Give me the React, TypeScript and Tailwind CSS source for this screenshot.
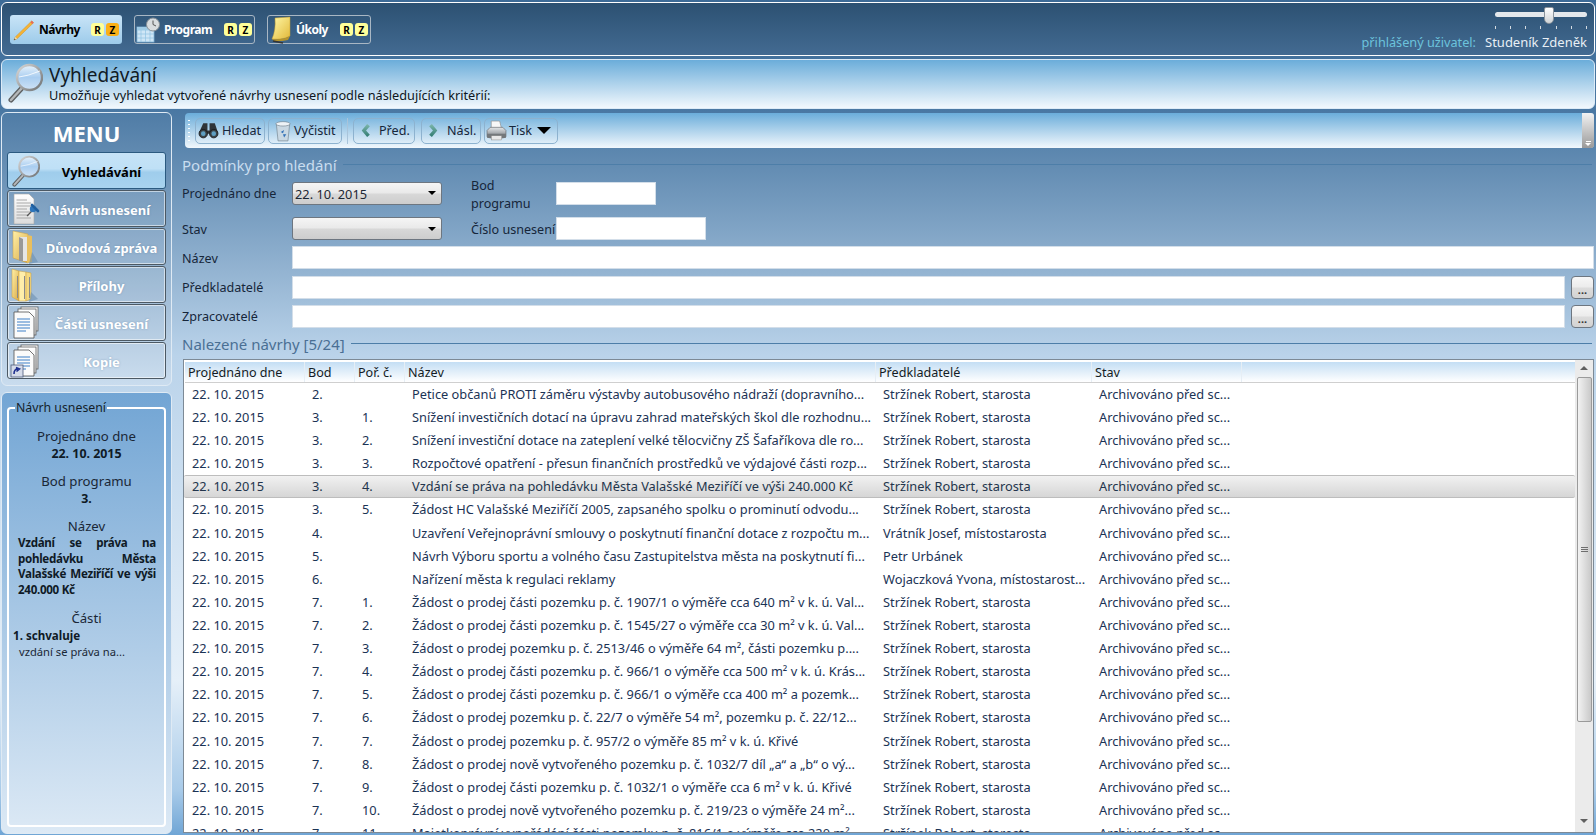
import React from "react";

const F = '"Noto Sans", "Open Sans", sans-serif';

type R = { b: string; p: string; n: string; w?: string; h?: number; sel?: boolean };
const S = "Stržínek Robert, starosta";
const rows: R[] = [
  { b: "2.", p: "", n: "Petice občanů PROTI záměru výstavby autobusového nádraží (dopravního..." },
  { b: "3.", p: "1.", n: "Snížení investičních dotací na úpravu zahrad mateřských škol dle rozhodnu..." },
  { b: "3.", p: "2.", n: "Snížení investiční dotace na zateplení velké tělocvičny ZŠ Šafaříkova dle ro..." },
  { b: "3.", p: "3.", n: "Rozpočtové opatření - přesun finančních prostředků ve výdajové části rozp..." },
  { b: "3.", p: "4.", n: "Vzdání se práva na pohledávku Města Valašské Meziříčí ve výši 240.000 Kč", sel: true },
  { b: "3.", p: "5.", n: "Žádost HC Valašské Meziříčí 2005, zapsaného spolku o prominutí odvodu...", h: 24 },
  { b: "4.", p: "", n: "Uzavření Veřejnoprávní smlouvy o poskytnutí finanční dotace z rozpočtu m...", w: "Vrátník Josef, místostarosta" },
  { b: "5.", p: "", n: "Návrh Výboru sportu a volného času Zastupitelstva města na poskytnutí fi...", w: "Petr Urbánek" },
  { b: "6.", p: "", n: "Nařízení města k regulaci reklamy", w: "Wojaczková Yvona, místostarost..." },
  { b: "7.", p: "1.", n: "Žádost o prodej části pozemku p. č. 1907/1 o výměře cca 640 m² v k. ú. Val..." },
  { b: "7.", p: "2.", n: "Žádost o prodej části pozemku p. č. 1545/27 o výměře cca 30 m² v k. ú. Val..." },
  { b: "7.", p: "3.", n: "Žádost o prodej pozemku p. č. 2513/46  o výměře 64 m², části pozemku p...." },
  { b: "7.", p: "4.", n: "Žádost o prodej části pozemku p. č. 966/1 o výměře cca 500 m² v k. ú. Krás..." },
  { b: "7.", p: "5.", n: "Žádost o prodej části pozemku p. č. 966/1 o výměře cca 400 m² a pozemk..." },
  { b: "7.", p: "6.", n: "Žádost o prodej pozemku p. č. 22/7 o výměře 54 m², pozemku p. č. 22/12...", h: 24 },
  { b: "7.", p: "7.", n: "Žádost o prodej pozemku p. č. 957/2 o výměře 85 m² v k. ú. Křivé" },
  { b: "7.", p: "8.", n: "Žádost o prodej nově vytvořeného pozemku p. č. 1032/7 díl „a“ a „b“ o vý..." },
  { b: "7.", p: "9.", n: "Žádost o prodej části pozemku p. č. 1032/1 o výměře cca 6 m² v k. ú. Křivé" },
  { b: "7.", p: "10.", n: "Žádost o prodej nově vytvořeného pozemku p. č. 219/23 o výměře 24 m²..." },
  { b: "7.", p: "11.", n: "Majetkoprávní vypořádání části pozemku p. č. 816/1 o výměře cca 220 m²" },
];

function Defs() {
  return (
    <svg width="0" height="0" className="block h-0 w-0">
      <defs>
        <linearGradient id="lens" x1="0" y1="0" x2="0" y2="1">
          <stop offset="0" stopColor="#e8f3fc" />
          <stop offset="0.5" stopColor="#a9cdf0" />
          <stop offset="1" stopColor="#cfe3f7" />
        </linearGradient>
        <linearGradient id="metal" x1="0" y1="0" x2="1" y2="1">
          <stop offset="0" stopColor="#d8d8d8" />
          <stop offset="1" stopColor="#6f7274" />
        </linearGradient>
        <linearGradient id="folder" x1="0" y1="0" x2="1" y2="1">
          <stop offset="0" stopColor="#fff0a8" />
          <stop offset="1" stopColor="#d9a944" />
        </linearGradient>
        <linearGradient id="paper" x1="0" y1="0" x2="0" y2="1">
          <stop offset="0" stopColor="#ffffff" />
          <stop offset="1" stopColor="#dcdcdc" />
        </linearGradient>
        <linearGradient id="note" x1="0" y1="0" x2="1" y2="1">
          <stop offset="0" stopColor="#fff8a8" />
          <stop offset="1" stopColor="#e2b93a" />
        </linearGradient>
        <linearGradient id="prn" x1="0" y1="0" x2="0" y2="1">
          <stop offset="0" stopColor="#e4e6e8" />
          <stop offset="1" stopColor="#80858a" />
        </linearGradient>
        <linearGradient id="chev" x1="0" y1="0" x2="0" y2="1">
          <stop offset="0" stopColor="#7fb8ad" />
          <stop offset="1" stopColor="#2f7a70" />
        </linearGradient>
      </defs>
    </svg>
  );
}

function Magnifier({ className }: { className: string }) {
  return (
    <svg viewBox="0 0 35 40" className={className}>
      <path d="M14 25 L3 37" stroke="#5d6062" strokeWidth="5" strokeLinecap="round" />
      <path d="M14 25 L3 37" stroke="#b5b8ba" strokeWidth="2.4" strokeLinecap="round" />
      <circle cx="21.5" cy="14.5" r="12.5" fill="url(#lens)" stroke="url(#metal)" strokeWidth="2.4" />
      <path d="M11 14 Q20 13 32 8" stroke="#ffffff" strokeWidth="1" fill="none" opacity="0.8" />
    </svg>
  );
}

function Pencil() {
  return (
    <svg viewBox="0 0 24 24" className="h-[22px] w-[24px]">
      <path d="M1 23 L2.5 19.5 L20.5 2 L22.5 4 L4.5 21.5 Z" fill="#f5b335" stroke="#c0841f" strokeWidth="0.4" />
      <path d="M1 23 L2.5 19.5 L4.5 21.5 Z" fill="#f3dcb0" />
      <path d="M1 23 L1.8 21.2 L2.9 22.3 Z" fill="#333" />
      <path d="M20.5 2 L22.5 4 L21 5.5 L19 3.5 Z" fill="#e8665e" />
    </svg>
  );
}

function CalendarClock() {
  return (
    <svg viewBox="0 0 24 26" className="h-[26px] w-[24px]">
      <rect x="1" y="10" width="17" height="15" fill="#cfe6f6" stroke="#7fb3d6" strokeWidth="0.8" />
      <rect x="1" y="10" width="17" height="3.5" fill="#9fcbe6" />
      <path d="M1 17 H18 M1 21 H18 M5 13 V25 M9.5 13 V25 M14 13 V25" stroke="#8fc2e2" strokeWidth="0.7" />
      <circle cx="17" cy="7.5" r="6.5" fill="#d8dcdf" stroke="#8b9298" strokeWidth="1" />
      <path d="M17 3.5 V7.5 L20 9" stroke="#555" strokeWidth="1" fill="none" />
    </svg>
  );
}

function StickyNote() {
  return (
    <svg viewBox="0 0 24 28" className="h-[28px] w-[24px]">
      <path d="M6 2 L21 1 L21 20 Q14 24 3 23 Q7 14 6 2 Z" fill="url(#note)" stroke="#c49c2f" strokeWidth="0.5" />
      <path d="M3 23 Q14 24 21 20 L19 24 Q10 26 5 25 Z" fill="#b5942c" />
      <path d="M4 25 L14 27" stroke="#333" strokeWidth="1.6" />
    </svg>
  );
}

function DocPin() {
  return (
    <svg viewBox="0 0 28 32" className="h-[32px] w-[28px]">
      <path d="M2 1 H17 L22 6 V31 H2 Z" fill="url(#paper)" stroke="#a4a4a4" strokeWidth="0.6" />
      <path d="M4.5 7 H15 M4.5 10 H19 M4.5 13 H19 M4.5 16 H15 M4.5 19 H19 M4.5 22 H17 M4.5 25 H19" stroke="#a8a8a8" strokeWidth="1" />
      <path d="M15 23 L20 18" stroke="#555" strokeWidth="1.2" />
      <circle cx="21" cy="16" r="3.2" fill="#2d75ba" />
      <path d="M20 12 L26 18" stroke="#1f5f9f" strokeWidth="2.6" strokeLinecap="round" />
    </svg>
  );
}

function FolderOne() {
  return (
    <svg viewBox="0 0 30 34" className="h-[34px] w-[30px]">
      <path d="M2 1 L17 4 V33 L2 28 Z" fill="url(#folder)" stroke="#c89d3e" strokeWidth="0.5" />
      <path d="M8 7 H16 V31 H8 Z" fill="#e5e5e5" />
      <path d="M8 7 L12 9 V31 H8 Z" fill="#777" opacity="0.7" />
      <path d="M16 5 L21 6 V32 L16 33 Z" fill="#e9bf5e" />
      <path d="M21 22 L27 32 L18 34 Z" fill="#6a8fb3" opacity="0.6" />
    </svg>
  );
}

function FolderMany() {
  return (
    <svg viewBox="0 0 30 34" className="h-[34px] w-[30px]">
      <path d="M1 1 L8 3 V33 L1 29 Z" fill="url(#folder)" stroke="#c89d3e" strokeWidth="0.5" />
      <path d="M8 3 L15 4 V33 L8 33 Z" fill="#ffeeaa" stroke="#c89d3e" strokeWidth="0.5" />
      <path d="M15 4 L20 5 V31 L15 33 Z" fill="#f5d980" stroke="#c89d3e" strokeWidth="0.5" />
      <path d="M6.5 8 V30 M13.5 8 V31 M18.5 9 V30" stroke="#8a8a8a" strokeWidth="1" />
      <path d="M20 24 L27 31 L18 34 Z" fill="#6a8fb3" opacity="0.6" />
    </svg>
  );
}

function Docs({ shortcut }: { shortcut?: boolean }) {
  return (
    <svg viewBox="0 0 32 34" className="h-[34px] w-[32px]">
      <rect x="11" y="1" width="17" height="24" fill="url(#paper)" stroke="#5f5f5f" strokeWidth="0.8" />
      <rect x="8" y="3" width="18" height="26" fill="url(#paper)" stroke="#5f5f5f" strokeWidth="0.8" />
      <path d="M4 6 H19 L24 11 V32 H4 Z" fill="#fbfbfb" stroke="#505050" strokeWidth="0.8" />
      <path d="M7 13 H20 M7 16 H20 M7 19 H20 M7 22 H20 M7 25 H16" stroke="#3f80c8" strokeWidth="1.2" />
      {shortcut && (
        <g>
          <rect x="1" y="21" width="12" height="12" fill="#d5dbe9" stroke="#4c5b7a" strokeWidth="0.8" />
          <path d="M4 30 Q4 25 8 25 M6 23.5 L9.5 25 L6.5 27.5" stroke="#1f2f8f" strokeWidth="1.6" fill="none" />
        </g>
      )}
    </svg>
  );
}

function Binoculars() {
  return (
    <svg viewBox="0 0 20 16" className="h-[17px] w-[21px]">
      <path d="M5 1 L9 1 L9 8 L11 8 L11 1 L16 1 L19 10 L12 11 L8 11 L1 10 Z" fill="#2f3438" />
      <circle cx="5" cy="11" r="4" fill="#3a4246" stroke="#15181a" strokeWidth="0.8" />
      <circle cx="15" cy="11" r="4" fill="#3a4246" stroke="#15181a" strokeWidth="0.8" />
      <circle cx="5" cy="11" r="2.2" fill="#5f9fc2" />
      <circle cx="15" cy="11" r="2.2" fill="#5f9fc2" />
    </svg>
  );
}

function Bin() {
  return (
    <svg viewBox="0 0 16 20" className="h-[22px] w-[18px]">
      <path d="M2 4 L14 4 L12.5 19 L3.5 19 Z" fill="#c9d8e3" stroke="#74838e" strokeWidth="0.6" />
      <ellipse cx="8" cy="3.5" rx="6.5" ry="2" fill="#eef3f7" stroke="#74838e" strokeWidth="0.6" />
      <path d="M6 11 L9 9 L8 12 Z M8 13 L11 13 L9 16 Z" fill="#2f6fb6" />
    </svg>
  );
}

function Printer() {
  return (
    <svg viewBox="0 0 20 20" className="h-[23px] w-[21px]">
      <path d="M5 1 H13 L15 9 H5 Z" fill="#f7f7f7" stroke="#8a8a8a" strokeWidth="0.6" />
      <path d="M1 10 L4 7 H16 L19 10 V16 H1 Z" fill="url(#prn)" stroke="#5f6366" strokeWidth="0.6" />
      <path d="M1 13 H19 V17 Q10 19 1 17 Z" fill="#74787b" />
      <rect x="5" y="15" width="10" height="4" fill="#e8e8e8" stroke="#7a7a7a" strokeWidth="0.4" />
    </svg>
  );
}

function Chevron({ left }: { left?: boolean }) {
  return (
    <svg viewBox="0 0 8 12" className="h-[13px] w-[9px]">
      <path d={left ? "M5.5 0 L0.5 6 L5.5 12 L8 10 L4.5 6 L8 2 Z" : "M2.5 0 L7.5 6 L2.5 12 L0 10 L3.5 6 L0 2 Z"} fill="url(#chev)" />
    </svg>
  );
}

function TopBtn({ icon, label, active, w, labelCls }: { icon: React.ReactNode; label: string; active?: boolean; w: string; labelCls: string }) {
  return (
    <div className={`flex h-[29px] items-center rounded-[3px] ${w} ${active ? "bg-[linear-gradient(#c9e4f7,#9dcbea)] text-black" : "border border-[#a9b7c4] text-white"}`}>
      <div className={`flex w-[28px] shrink-0 items-center justify-center ${active ? "" : "-ml-px"}`}>{icon}</div>
      <span className={`${labelCls} text-[12px] font-bold tracking-[-0.5px]`}>{label}</span>
      <div className={`ml-auto flex items-center gap-[2px] ${active ? "mr-[3px]" : "mr-[2px]"}`}>
        <span className="flex h-[13px] w-[13px] items-center justify-center rounded-[3px] bg-[#ffff99] text-[10px] font-bold text-black">R</span>
        <span className={`flex h-[13px] w-[13px] items-center justify-center rounded-[3px] text-[10px] font-bold text-black ${active ? "bg-[#fbb017]" : "bg-[#ffff99]"}`}>Z</span>
      </div>
    </div>
  );
}

function MenuBtn({ icon, label, active, cx }: { icon: React.ReactNode; label: string; active?: boolean; cx: string }) {
  return (
    <div className={`flex h-[37px] items-center rounded-[3px] border ${active ? "border-[#2b5a80] bg-[linear-gradient(#c6e3f7_0%,#bfe0f6_45%,#9fcdec_55%,#a8d3ef_100%)]" : "border-[#4c5964] bg-white/5 shadow-[inset_0_0_0_1px_rgba(255,255,255,0.55)]"}`}>
      <div className="flex w-[36px] shrink-0 items-center justify-center">{icon}</div>
      <span className={`flex-1 whitespace-nowrap pt-[3px] text-center text-[13px] font-bold ${cx} ${active ? "text-black" : "text-white [text-shadow:0_0_2px_rgba(70,110,150,0.5)]"}`}>{label}</span>
    </div>
  );
}

function ToolBtn({ children, w }: { children: React.ReactNode; w: string }) {
  return <div className={`flex h-[26px] items-center rounded-[5px] border border-[#8db2cf] text-[12.6px] text-[#16263a] ${w}`}>{children}</div>;
}

function Combo({ value }: { value?: string }) {
  return (
    <div className="flex h-[23px] w-[150px] items-center justify-between rounded-[3px] border border-[#6d7680] bg-[linear-gradient(#f5f5f5_0%,#e9e9e9_48%,#d8d8d8_52%,#cdcdcd_100%)] pl-[2px] pr-[5px] text-[12.8px] text-[#1c2733]">
      <span className="pt-[2px]">{value ?? ""}</span>
      <span className="h-0 w-0 border-x-[4px] border-t-[4px] border-x-transparent border-t-black" />
    </div>
  );
}

function Field({ cls }: { cls: string }) {
  return <input readOnly className={`h-[23px] border border-[#d3dee9] bg-white outline-none ${cls}`} />;
}

function Dots() {
  return (
    <div className="flex h-[23px] w-[23px] shrink-0 items-end justify-center rounded-[4px] border border-[#6d7680] bg-[linear-gradient(#f7f7f7_0%,#ececec_48%,#dcdcdc_52%,#d3d3d3_100%)] pb-[3px] text-[11px] font-bold leading-[11px] text-[#333]">
      ...
    </div>
  );
}

function Section({ title, cls }: { title: string; cls: string }) {
  return (
    <div className="flex h-[20px] items-center">
      <span className={`whitespace-nowrap text-[15px] ${cls}`}>{title}</span>
      <div className="mb-[2px] ml-[6px] mr-[2px] h-px flex-1 bg-[#4d7ea8]" />
    </div>
  );
}

const cols = "grid grid-cols-[120px_50px_50px_471px_216px_150px]";

export default function App() {
  return (
    <div
      className="flex h-[835px] w-[1596px] flex-col overflow-hidden bg-[linear-gradient(#3d6b97_0px,#4a78a3_112px,#bad3ea_355px,#e6f0f9_680px,#a9cbe9_790px,#6fa5d5_835px)] text-[12.6px] leading-[16px] text-[#16263a]"
      style={{ fontFamily: F }}
    >
      <Defs />
      {/* top bar */}
      <header className="mx-px mt-[2px] flex h-[54px] items-start justify-between rounded-[6px] border border-white bg-[linear-gradient(#2c5172,#436b92)] pl-[8px] pr-[7px]">
        <div className="mt-[12px] flex gap-[12px]">
          <TopBtn active icon={<Pencil />} label="Návrhy" w="w-[112px]" labelCls="ml-px" />
          <TopBtn icon={<CalendarClock />} label="Program" w="w-[121px]" labelCls="ml-[2px]" />
          <TopBtn icon={<StickyNote />} label="Úkoly" w="w-[104px]" labelCls="ml-px" />
        </div>
        <div className="flex flex-col items-end">
          <div className="mt-[3px] w-[92px]">
            <div className="relative mt-[6px] h-[5px] rounded-full bg-[#e4e8ec]">
              <div className="absolute left-[49px] top-[-5px] h-[17px] w-[10px] rounded-b-[5px] rounded-t-[2px] border border-[#8b949c] bg-[linear-gradient(#ffffff,#cfd3d6)]" />
            </div>
            <div className="mt-[9px] flex justify-between">
              {[0, 1, 2, 3, 4, 5, 6].map((i) => (
                <span key={i} className="h-[3px] w-px bg-[#d5dce2]" />
              ))}
            </div>
          </div>
          <div className="mt-[4px] flex h-[18px] items-center whitespace-nowrap text-[13px]">
            <span className="text-[12.7px] text-[#6cc3dc]">přihlášený uživatel:</span>
            <span className="ml-[9px] text-[#e8eff5]">Studeník Zdeněk</span>
          </div>
        </div>
      </header>

      {/* title */}
      <div className="mx-px mt-[3px] flex h-[50px] rounded-[6px] border border-[#dcebf7] bg-[linear-gradient(#6badda,#f2f8fd)] pl-[6px]">
        <Magnifier className="mt-[3px] h-[40px] w-[35px] shrink-0" />
        <div className="ml-[6px] mt-[2px]">
          <div className="text-[19px] leading-[26px] text-[#111b25]">Vyhledávání</div>
          <div className="text-[12.72px] leading-[15px] text-[#0d1722]">Umožňuje vyhledat vytvořené návrhy usnesení podle následujících kritérií:</div>
        </div>
      </div>

      <div className="mt-[3px] flex min-h-0 flex-1">
        {/* sidebar */}
        <aside className="ml-px flex w-[171px] shrink-0 flex-col">
          <div className="h-[274px] rounded-[6px] border border-[#dfeaf4] bg-[linear-gradient(#4f7ca6,#c9dcee)] px-[5px]">
            <div className="h-[39px] pt-[5px] text-center text-[22px] font-bold leading-[30px] text-white">MENU</div>
            <div className="flex flex-col gap-px">
              <MenuBtn active cx="pr-[6px]" icon={<Magnifier className="h-[32px] w-[28px]" />} label="Vyhledávání" />
              <MenuBtn cx="pr-[10px]" icon={<DocPin />} label="Návrh usnesení" />
              <MenuBtn cx="pr-[6px]" icon={<FolderOne />} label="Důvodová zpráva" />
              <MenuBtn cx="pr-[6px]" icon={<FolderMany />} label="Přílohy" />
              <MenuBtn cx="pr-[6px]" icon={<Docs />} label="Části usnesení" />
              <MenuBtn cx="pr-[6px]" icon={<Docs shortcut />} label="Kopie" />
            </div>
          </div>
          <div className="mb-px mt-[6px] flex-1 rounded-[6px] border border-[#dfeaf4] bg-[linear-gradient(#72a5d4,#dce9f5)] px-[5px] pb-[6px] pt-[8px]">
            <fieldset className="h-full rounded-[4px] border-2 border-white text-center">
              <legend className="ml-[6px] px-px text-left text-[12.3px] leading-[14px] text-[#141f2b]">Návrh usnesení</legend>
              <div className="mt-[12px] text-[13.2px] leading-[18px] text-[#1a2736]">Projednáno dne</div>
              <div className="text-[12.4px] font-bold leading-[18px] text-[#0f1a26]">22. 10. 2015</div>
              <div className="mt-[9px] text-[13.2px] leading-[18px] text-[#1a2736]">Bod programu</div>
              <div className="text-[12.4px] font-bold leading-[18px] text-[#0f1a26]">3.</div>
              <div className="mt-[9px] text-[13.2px] leading-[18px] text-[#1a2736]">Název</div>
              <div className="ml-[9px] w-[138px] text-justify text-[11.6px] font-bold leading-[15.7px] tracking-[-0.3px] text-[#0f1a26]">
                Vzdání se práva na pohledávku Města Valašské Meziříčí ve výši 240.000 Kč
              </div>
              <div className="mt-[11px] text-[13.2px] leading-[18px] text-[#1a2736]">Části</div>
              <div className="ml-[4px] mt-px text-left text-[11.6px] font-bold leading-[16px] text-[#0f1a26]">1. schvaluje</div>
              <div className="ml-[10px] text-left text-[11.2px] leading-[16px] text-[#1a2736]">vzdání se práva na...</div>
            </fieldset>
          </div>
        </aside>

        {/* content */}
        <main className="ml-[10px] flex min-w-0 flex-1 flex-col pr-[2px]">
          <div className="ml-[3px] mt-px flex h-[35px] shrink-0 items-center rounded-[4px] bg-[linear-gradient(#6badda,#f2f8fd)]">
            <div className="ml-[3px] flex h-[24px] w-[3px] flex-col justify-between py-px">
              {[0, 1, 2, 3, 4, 5].map((i) => (
                <span key={i} className="h-px w-[2px] bg-white" />
              ))}
            </div>
            <div className="ml-[4px] flex items-center gap-[3px]">
              <ToolBtn w="w-[70px]">
                <span className="ml-[2px] flex"><Binoculars /></span>
                <span className="ml-[3px]">Hledat</span>
              </ToolBtn>
              <ToolBtn w="w-[74px]">
                <span className="ml-[5px] flex"><Bin /></span>
                <span className="ml-[2px]">Vyčistit</span>
              </ToolBtn>
              <div className="mx-[2px] h-[26px] w-px bg-[#a9c4da]" />
              <ToolBtn w="w-[62px]">
                <span className="ml-[7px] flex"><Chevron left /></span>
                <span className="ml-[9px]">Před.</span>
              </ToolBtn>
              <span className="w-0" />
              <ToolBtn w="w-[60px]">
                <span className="ml-[7px] flex"><Chevron /></span>
                <span className="ml-[9px]">Násl.</span>
              </ToolBtn>
              <ToolBtn w="w-[74px]">
                <span className="ml-px flex"><Printer /></span>
                <span className="ml-[2px]">Tisk</span>
                <span className="ml-[5px] h-0 w-0 border-x-[7px] border-t-[7px] border-x-transparent border-t-black" />
              </ToolBtn>
            </div>
            <div className="ml-auto flex h-full w-[12px] flex-col items-center justify-end gap-px rounded-r-[3px] bg-[linear-gradient(#f2f2f2,#9a9a9a)] pb-[2px]">
              <span className="h-px w-[5px] bg-white" />
              <span className="h-0 w-0 border-x-[3px] border-t-[3px] border-x-transparent border-t-white" />
            </div>
          </div>

          <div className="mt-[7px] shrink-0">
            <Section title="Podmínky pro hledání" cls="text-[#c9ddef]" />
          </div>

          <div className="mt-[7px] flex h-[22px] shrink-0 items-center">
            <label className="w-[110px] shrink-0 pt-[2px]">Projednáno dne</label>
            <Combo value="22. 10. 2015" />
            <label className="ml-[29px] w-[85px] shrink-0 pt-[3px] leading-[18px]">
              Bod
              <br />
              programu
            </label>
            <Field cls="w-[100px]" />
          </div>
          <div className="mt-[13px] flex h-[23px] shrink-0 items-center">
            <label className="w-[110px] shrink-0 pt-[2px]">Stav</label>
            <Combo />
            <label className="ml-[29px] w-[85px] shrink-0 whitespace-nowrap pt-[2px]">Číslo usnesení</label>
            <Field cls="w-[150px]" />
          </div>
          <div className="mt-[6px] flex h-[23px] shrink-0 items-center">
            <label className="w-[110px] shrink-0 pt-[2px]">Název</label>
            <Field cls="min-w-0 flex-1" />
          </div>
          <div className="mt-[7px] flex h-[23px] shrink-0 items-center">
            <label className="w-[110px] shrink-0">Předkladatelé</label>
            <Field cls="min-w-0 flex-1" />
            <span className="ml-[6px]"><Dots /></span>
          </div>
          <div className="mt-[6px] flex h-[23px] shrink-0 items-center">
            <label className="w-[110px] shrink-0">Zpracovatelé</label>
            <Field cls="min-w-0 flex-1" />
            <span className="ml-[6px]"><Dots /></span>
          </div>

          <div className="mt-[6px] shrink-0">
            <Section title="Nalezené návrhy [5/24]" cls="text-[#4a6f94]" />
          </div>

          <div className="mb-[2px] ml-px mt-[5px] flex min-h-0 flex-1 overflow-hidden border border-[#7d8a96] bg-white">
            <div className="min-w-0 flex-1 overflow-hidden pt-[2px]">
              <div className={`${cols} ml-px h-[21px] border-b border-[#cfcfcf] bg-[linear-gradient(#c4def4,#ffffff)] text-[#141c25]`}>
                {["Projednáno dne", "Bod", "Poř. č.", "Název", "Předkladatelé", "Stav"].map((h) => (
                  <div key={h} className="flex items-center border-r border-[#e6eef5] pl-[3px] pt-[2px]">{h}</div>
                ))}
              </div>
              <div className="text-[12.8px]">
                {rows.map((r, i) => (
                  <div
                    key={i}
                    className={`${cols} pl-px ${r.h === 24 ? "h-[24px]" : "h-[23px]"} items-center whitespace-nowrap pb-[2px] text-[#1b3355] ${r.sel ? "rounded-[2px] border-y border-[#bdbdbd] bg-[linear-gradient(#f1f1f1,#d6d6d6)] text-[#23354c]" : ""}`}
                  >
                    <div className="pl-[7px]">22. 10. 2015</div>
                    <div className="pl-[7px]">{r.b}</div>
                    <div className="pl-[7px]">{r.p}</div>
                    <div className="overflow-hidden pl-[7px]">{r.n}</div>
                    <div className="overflow-hidden pl-[7px]">{r.w ?? S}</div>
                    <div className="overflow-hidden pl-[7px]">Archivováno před sc...</div>
                  </div>
                ))}
              </div>
            </div>
            <div className="flex w-[18px] shrink-0 flex-col items-center bg-[#ebebeb]">
              <span className="mt-[6px] h-0 w-0 border-x-[4px] border-b-[4px] border-x-transparent border-b-[#606060]" />
              <div className="mt-[7px] flex h-[345px] w-[15px] items-center justify-center rounded-[2px] border border-[#9a9a9a] bg-[linear-gradient(90deg,#f2f2f2,#c9c9c9)]">
                <div className="flex w-[7px] flex-col gap-px">
                  <span className="h-px bg-[#6e6e6e]" />
                  <span className="h-px bg-[#6e6e6e]" />
                  <span className="h-px bg-[#6e6e6e]" />
                </div>
              </div>
              <span className="mb-[9px] mt-auto h-0 w-0 border-x-[4px] border-t-[4px] border-x-transparent border-t-[#606060]" />
            </div>
          </div>
        </main>
      </div>
    </div>
  );
}
